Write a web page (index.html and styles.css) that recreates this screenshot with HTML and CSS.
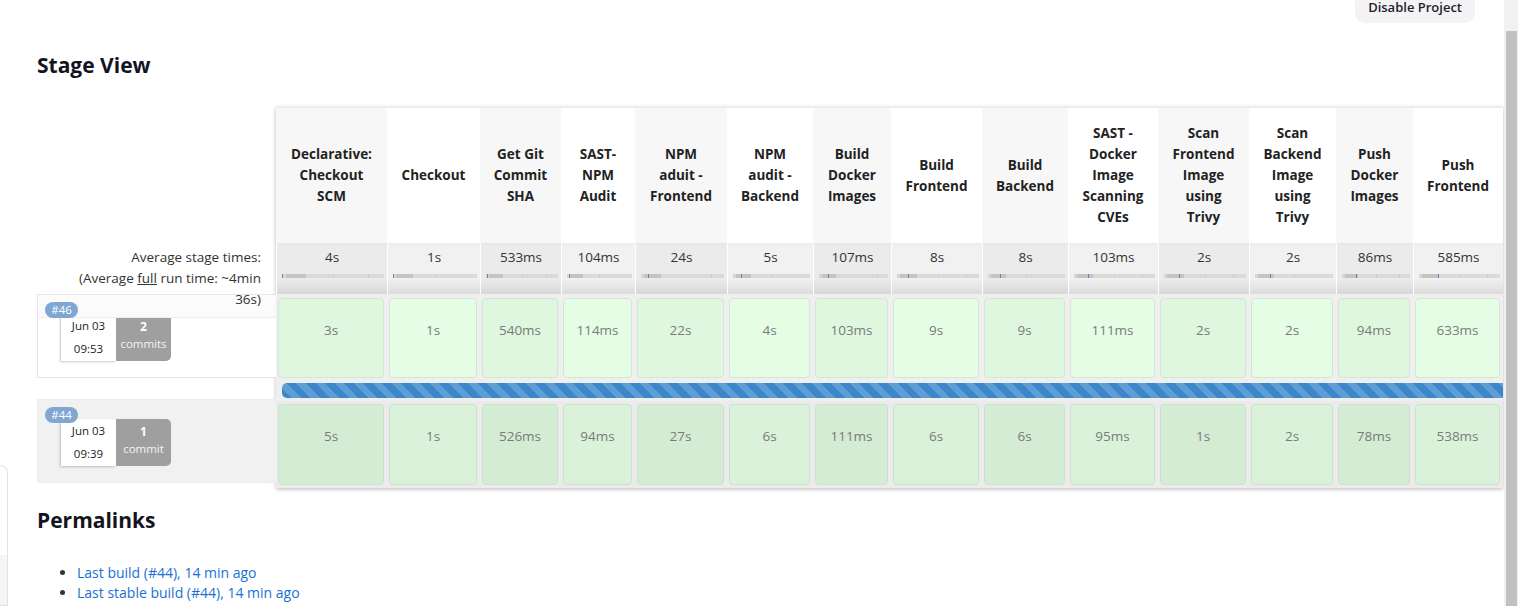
FILE: index.html
```html
<!DOCTYPE html>
<html>
<head>
<meta charset="utf-8">
<link rel="stylesheet" href="styles.css">
</head>
<body>
<div class="page">
  <aside class="side"><div class="side-box"><div class="side-low"></div></div></aside>
  <main class="main">
    <div class="topbar"><button class="btn">Disable Project</button></div>
    <h2 class="h">Stage View</h2>
    <div class="sv">
      <div class="sv-left">
        <div class="l-head"></div>
        <div class="l-avg">Average stage times:<br>(Average <u>full</u> run time: ~4min<br>36s)</div>
        <div class="l-build first">
          <div class="band"></div>
          <span class="badge">#46</span>
          <div class="meta">
            <div class="date"><div>Jun 03</div><div>09:53</div></div>
            <div class="commits"><b>2</b><div>commits</div></div>
          </div>
        </div>
        <div class="l-gap"></div>
        <div class="l-build alt">
          <span class="badge">#44</span>
          <div class="meta">
            <div class="date"><div>Jun 03</div><div>09:39</div></div>
            <div class="commits"><b>1</b><div>commit</div></div>
          </div>
        </div>
      </div>
      <div class="sv-table">
        <div class="hc g">Declarative:<br>Checkout<br>SCM</div>
        <div class="hc">Checkout</div>
        <div class="hc g">Get Git<br>Commit<br>SHA</div>
        <div class="hc">SAST-<br>NPM<br>Audit</div>
        <div class="hc g">NPM<br>aduit -<br>Frontend</div>
        <div class="hc">NPM<br>audit -<br>Backend</div>
        <div class="hc g">Build<br>Docker<br>Images</div>
        <div class="hc">Build<br>Frontend</div>
        <div class="hc g">Build<br>Backend</div>
        <div class="hc">SAST -<br>Docker<br>Image<br>Scanning<br>CVEs</div>
        <div class="hc g">Scan<br>Frontend<br>Image<br>using<br>Trivy</div>
        <div class="hc">Scan<br>Backend<br>Image<br>using<br>Trivy</div>
        <div class="hc g">Push<br>Docker<br>Images</div>
        <div class="hc">Push<br>Frontend</div>

        <div class="ac g"><span>4s</span><i class="mini" style="--t:0%"></i></div>
        <div class="ac"><span>1s</span><i class="mini" style="--t:0%"></i></div>
        <div class="ac g"><span>533ms</span><i class="mini" style="--t:1%"></i></div>
        <div class="ac"><span>104ms</span><i class="mini" style="--t:3%"></i></div>
        <div class="ac g"><span>24s</span><i class="mini" style="--t:8%"></i></div>
        <div class="ac"><span>5s</span><i class="mini" style="--t:11%"></i></div>
        <div class="ac g"><span>107ms</span><i class="mini" style="--t:13%"></i></div>
        <div class="ac"><span>8s</span><i class="mini" style="--t:14%"></i></div>
        <div class="ac g"><span>8s</span><i class="mini" style="--t:16%"></i></div>
        <div class="ac"><span>103ms</span><i class="mini" style="--t:17%"></i></div>
        <div class="ac g"><span>2s</span><i class="mini" style="--t:18%"></i></div>
        <div class="ac"><span>2s</span><i class="mini" style="--t:19%"></i></div>
        <div class="ac g"><span>86ms</span><i class="mini" style="--t:21%"></i></div>
        <div class="ac"><span>585ms</span><i class="mini" style="--t:24%"></i></div>

        <div class="bc r1 g"><div class="box">3s</div></div>
        <div class="bc r1"><div class="box">1s</div></div>
        <div class="bc r1 g"><div class="box">540ms</div></div>
        <div class="bc r1"><div class="box">114ms</div></div>
        <div class="bc r1 g"><div class="box">22s</div></div>
        <div class="bc r1"><div class="box">4s</div></div>
        <div class="bc r1 g"><div class="box">103ms</div></div>
        <div class="bc r1"><div class="box">9s</div></div>
        <div class="bc r1 g"><div class="box">9s</div></div>
        <div class="bc r1"><div class="box">111ms</div></div>
        <div class="bc r1 g"><div class="box">2s</div></div>
        <div class="bc r1"><div class="box">2s</div></div>
        <div class="bc r1 g"><div class="box">94ms</div></div>
        <div class="bc r1"><div class="box">633ms</div></div>

        <div class="prog"><div class="bar"></div></div>

        <div class="bc r2 g"><div class="box">5s</div></div>
        <div class="bc r2"><div class="box">1s</div></div>
        <div class="bc r2 g"><div class="box">526ms</div></div>
        <div class="bc r2"><div class="box">94ms</div></div>
        <div class="bc r2 g"><div class="box">27s</div></div>
        <div class="bc r2"><div class="box">6s</div></div>
        <div class="bc r2 g"><div class="box">111ms</div></div>
        <div class="bc r2"><div class="box">6s</div></div>
        <div class="bc r2 g"><div class="box">6s</div></div>
        <div class="bc r2"><div class="box">95ms</div></div>
        <div class="bc r2 g"><div class="box">1s</div></div>
        <div class="bc r2"><div class="box">2s</div></div>
        <div class="bc r2 g"><div class="box">78ms</div></div>
        <div class="bc r2"><div class="box">538ms</div></div>
      </div>
    </div>
    <h2 class="h perma">Permalinks</h2>
    <ul class="links">
      <li><a href="#">Last build (#44), 14 min ago</a></li>
      <li><a href="#">Last stable build (#44), 14 min ago</a></li>
    </ul>
  </main>
  <div class="scrollbar"><div class="thumb"></div></div>
</div>
</body>
</html>
```

FILE: styles.css
```css
* { box-sizing: border-box; }
html, body { margin: 0; padding: 0; background: #fff; }
body {
  font-family: "Open Sans", "Noto Sans", sans-serif;
  font-size: 14px;
  color: #333;
}
.page {
  display: flex;
  height: 606px;
  overflow: hidden;
}
.side {
  width: 8px;
  flex: none;
  display: flex;
  flex-direction: column;
}
.side-box {
  margin-top: 465px;
  flex: 1;
  border: 1px solid #e2e2ea;
  border-left: none;
  border-radius: 0 9px 0 0;
  display: flex;
  flex-direction: column;
  justify-content: flex-end;
}
.side-low {
  height: 50px;
  background: #f5f5f7;
}
.main {
  flex: 1;
  min-width: 0;
  overflow: hidden;
  padding: 0 29px;
}
.topbar {
  display: flex;
  justify-content: flex-end;
  height: 23px;
}
.btn {
  margin-top: -9px;
  height: 32px;
  padding: 0 13px;
  border: none;
  border-radius: 10px;
  background: #f3f3f6;
  color: #1e1e2c;
  font-family: "Open Sans", "Noto Sans", sans-serif;
  font-size: 13px;
  font-weight: 600;
}
.h {
  margin: 30px 0 0;
  font-size: 21px;
  line-height: 25px;
  font-weight: 700;
  color: #14141f;
}
.sv {
  display: flex;
  width: max-content;
  margin-top: 29px;
}
.sv-left {
  width: 239px;
  display: flex;
  flex-direction: column;
}
.l-head { height: 135px; }
.l-avg {
  height: 51px;
  padding: 5px 15px 0 0;
  text-align: right;
  line-height: 21px;
  position: relative;
  z-index: 2;
  font-size: 13.5px;
}
.l-build {
  height: 84px;
  padding: 7px 0 0 7px;
  border: 1px solid #e6e6e6;
  border-right: none;
  position: relative;
  display: flex;
  flex-direction: column;
  align-items: flex-start;
}
.l-build.first { margin-top: 1px; background: #fff; }
.band {
  position: absolute;
  left: 0; right: 0; top: 0;
  height: 23px;
  border-bottom: 1px solid #eeeeee;
  background: linear-gradient(#fcfcfc, #fafafa);
}
.l-gap { height: 21px; }
.l-build.alt {
  background: #f1f1f1;
  border-color: #ececec;
}
.badge {
  position: relative;
  z-index: 1;
  display: block;
  width: 33px;
  height: 16px;
  border-radius: 8px;
  background: #80a7d2;
  color: #fff;
  font-size: 11.5px;
  line-height: 16px;
  text-align: center;
}
.meta {
  display: flex;
  margin: -4px 0 0 16px;
}
.date {
  width: 55px;
  height: 47px;
  background: #fff;
  box-shadow: -1px 1px 2px rgba(0,0,0,0.22);
  text-align: center;
  font-size: 11.5px;
  line-height: 23px;
  color: #222;
}
.commits {
  width: 55px;
  height: 47px;
  padding-top: 4px;
  background: #9f9f9f;
  border-radius: 0 5px 5px 0;
  color: #f4f4f4;
  text-align: center;
  font-size: 11.5px;
  line-height: 17px;
}
.commits b { display: block; color: #fff; font-size: 12px; }
.sv-table {
  display: grid;
  grid-template-columns: 111px 93px 81px 74px 92px 86px 78px 91px 86px 90px 91px 87px 77px 90px;
  grid-template-rows: 135px 51px 86px 21px 87px;
  box-shadow: 0 1px 4px rgba(0,0,0,0.28);
  overflow: hidden;
  border-top: 1px solid #ececec;
}
.hc {
  display: flex;
  align-items: center;
  justify-content: center;
  text-align: center;
  font-weight: 700;
  line-height: 21px;
  color: #222;
  background: #fff;
  font-size: 13.5px;
}
.hc.g { background: #f7f7f7; }
.ac {
  display: flex;
  flex-direction: column;
  align-items: center;
  padding-top: 4px;
  background: linear-gradient(#ececec 0, #f1f1f1 3px, #f1f1f1 70%, #dcdcdc 100%);
  border-left: 1px solid #fff;
  line-height: 21px;
  color: #333;
  font-size: 13.5px;
}
.ac.g { background: linear-gradient(#e6e6e6 0, #ebebeb 3px, #ebebeb 70%, #d8d8d8 100%); }
.mini {
  display: block;
  align-self: stretch;
  margin: 6px 3px 0 5px;
  height: 4px;
  background:
    linear-gradient(to right, transparent calc(var(--t) ), #4f86d6 calc(var(--t)), #4f86d6 calc(var(--t) + 1px), transparent calc(var(--t) + 1px)),
    linear-gradient(to right, #d6d6d6 0 4%, #c4c4c4 4% 24%, #dadada 24% 50%, #cfcfcf 50% 51%, #dadada 51% 84%, #cfcfcf 84% 85%, #dadada 85% 100%);
}
.bc {
  background: #efefef;
  padding: 4px 3px 2px 2px;
}
.bc.r2 { padding: 3px 3px 3px 2px; background: #ebebeb; }
.box {
  height: 100%;
  border: 1px solid #d3e6d3;
  border-radius: 4px;
  background: #e5fde5;
  text-align: center;
  padding-top: 21px;
  line-height: 20px;
  color: #7a7a7a;
  font-size: 13.5px;
}
.bc.r1.g .box { background: #dff7df; }
.bc.r2 .box { background: #daf2da; border-color: #cde0cd; }
.bc.r2.g .box { background: #d4ecd4; }
.prog {
  grid-column: 1 / -1;
  background: #efefef;
  padding: 3px 0 3px 6px;
}
.bar {
  height: 15px;
  border-radius: 5px 0 0 5px;
  background: repeating-linear-gradient(45deg, #3d86c7 0 7px, #5f9dd5 7px 13.5px);
}
.perma { margin-top: 20px; }
.links {
  margin: 30px 0 0;
  padding-left: 40px;
  line-height: 20px;
}
.links a {
  color: #1a6fd6;
  text-decoration: none;
  font-weight: 500;
}
.scrollbar {
  width: 14px;
  flex: none;
  background: #f1f1f1;
  display: flex;
  flex-direction: column;
}
.thumb {
  flex: 1;
  margin: 31px 1px 0 2px;
  background: #c1c1c1;
}
```
